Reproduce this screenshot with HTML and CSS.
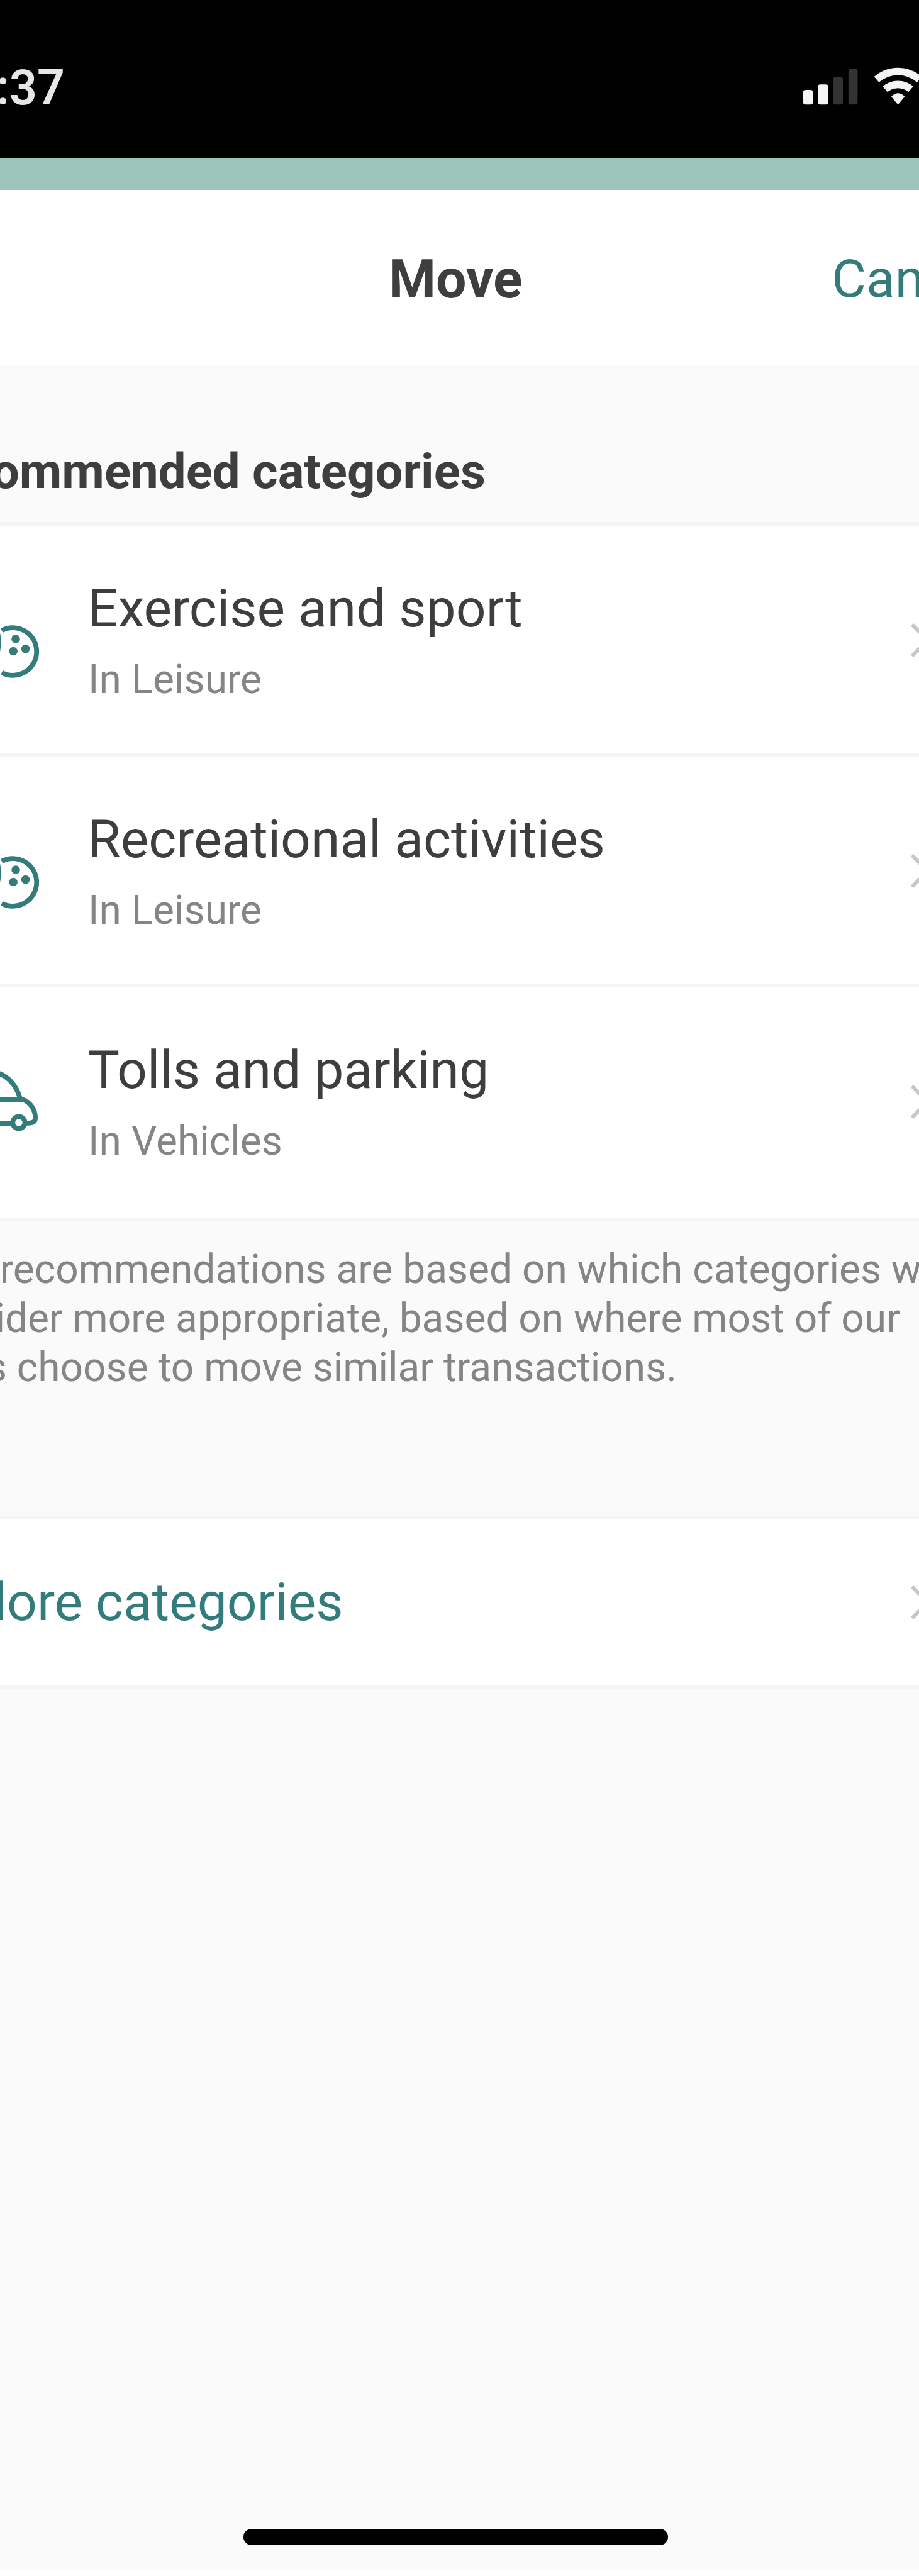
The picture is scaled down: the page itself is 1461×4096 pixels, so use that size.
FILE: index.html
```html
<!DOCTYPE html>
<html lang="en">
<head>
<meta charset="utf-8">
<meta name="viewport" content="width=device-width, initial-scale=1">
<title>Move</title>
<link rel="stylesheet" href="styles.css">
</head>
<body>
<svg class="defs" aria-hidden="true">
  <symbol id="bowling" viewBox="-150 0 220 136">
    <path d="M3 52A39 39 0 1 1 3 121"/>
    <path d="M-29 10c-10 0-14 8-12 17 2 10 0 16-4 26-8 20-6 50 2 72h28c8-22 18-52 10-72-4-10-14-16-12-26 2-9-2-17-12-17z"/>
    <g class="solid"><circle cx="26" cy="66" r="7"/><circle cx="22" cy="86" r="7"/><circle cx="42" cy="82" r="7"/></g>
  </symbol>
  <symbol id="car" viewBox="-150 0 220 136">
    <path d="M33 62C27 40 12 25-6 20-22 16-50 17-60 20-76 30-88 48-94 64M-94 64H37C51 69 58 82 58 94 58 101 55 103 43 103M19 104H-70M-94 64c-14 4-18 20-16 40h16M-26 18v46"/>
    <circle cx="31" cy="102" r="10"/><circle cx="-82" cy="102" r="10"/>
  </symbol>
  <symbol id="chevron" viewBox="0 0 34 58"><path d="M3 4l25 25-25 25"/></symbol>
</svg>

<div class="screen">
  <div class="status">
    <span class="time">9:37</span>
    <svg class="signals" viewBox="0 0 330 78" aria-hidden="true">
      <rect x="6" y="42" width="16" height="24" rx="4"/>
      <rect x="30" y="33" width="17" height="33" rx="4"/>
      <rect class="off" x="55" y="21" width="16" height="45" rx="4"/>
      <rect class="off" x="80" y="8" width="15" height="58" rx="4"/>
      <path class="arc" d="M126 25A53 53 0 0 1 196 25M140 41A32 32 0 0 1 182 41"/>
      <path d="M150 53q11-11 22 0l-9 11q-2 2-4 0z"/>
      <rect x="226" y="8" width="94" height="56" rx="16"/>
    </svg>
  </div>

  <header class="header">
    <h1 class="title">Move</h1>
    <button class="cancel" type="button">Cancel</button>
  </header>

  <main class="content">
    <h2 class="heading">Recommended categories</h2>
    <ul class="group">
      <li><a class="row" href="#exercise">
        <svg class="icon" aria-hidden="true"><use href="#bowling"/></svg>
        <span class="label"><span class="name">Exercise and sport</span><span class="parent">In Leisure</span></span>
        <svg class="chevron" aria-hidden="true"><use href="#chevron"/></svg>
      </a></li>
      <li><a class="row" href="#recreation">
        <svg class="icon" aria-hidden="true"><use href="#bowling"/></svg>
        <span class="label"><span class="name">Recreational activities</span><span class="parent">In Leisure</span></span>
        <svg class="chevron" aria-hidden="true"><use href="#chevron"/></svg>
      </a></li>
      <li><a class="row" href="#tolls">
        <svg class="icon" aria-hidden="true"><use href="#car"/></svg>
        <span class="label"><span class="name">Tolls and parking</span><span class="parent">In Vehicles</span></span>
        <svg class="chevron" aria-hidden="true"><use href="#chevron"/></svg>
      </a></li>
    </ul>
    <p class="note">Your recommendations are based on which categories we consider more appropriate, based on where most of our users choose to move similar transactions.</p>
    <a class="row explore" href="#categories">
      <span class="label">Explore categories</span>
      <svg class="chevron" aria-hidden="true"><use href="#chevron"/></svg>
    </a>
  </main>

  <div class="home"></div>
</div>
</body>
</html>
```

FILE: styles.css
```css
:root {
  --teal: #347c7c;
  --ink: #3e3e3e;
  --muted: #858585;
  --line: #f5f5f5;
  --edge: 80px;
}

* { box-sizing: border-box; }

body {
  margin: 0;
  overflow-x: hidden;
  background: #fafafa;
  font-family: Roboto, "Liberation Sans", sans-serif;
  color: var(--ink);
}

.defs { display: none; }

/* The phone screen is wider than the window and bleeds off both sides. */
.screen {
  display: flex;
  flex-direction: column;
  min-height: 100vh;
  margin: 0 -213px 0 -226px;
  border-bottom: 10px solid #fff;
}

.status {
  display: flex;
  align-items: center;
  justify-content: space-between;
  padding: 95px 82px 66px 176px;
  background: #000;
  color: #e6e6e6;
}

.time {
  font-size: 77px;
  line-height: 90px;
  font-weight: 600;
}

.signals { width: 321px; height: 76px; fill: #f4f4f4; }
.signals .off { fill: #333; }
.signals .arc { fill: none; stroke: #f4f4f4; stroke-width: 12; }

.header {
  display: grid;
  grid-template-columns: 1fr auto 1fr;
  padding: 92px 96px 87px;
  border-top: 51px solid #9cc4b9;
  background: #fff;
  line-height: 100px;
}

.title {
  grid-column: 2;
  margin: 0;
  font-size: 86px;
  font-weight: 700;
}

.cancel {
  justify-self: end;
  padding: 0;
  border: 0;
  background: none;
  font: inherit;
  font-size: 84px;
  color: var(--teal);
}

.heading {
  margin: 0;
  padding: 124px var(--edge) 35px;
  font-size: 78px;
  line-height: 90px;
}

.group {
  margin: 0;
  padding: 0 0 5px;
  border-bottom: 6px solid var(--line);
  background: #fff;
  list-style: none;
}

.row {
  display: flex;
  align-items: center;
  gap: 72px;
  padding: 82px 193px 79px var(--edge);
  border-top: 6px solid var(--line);
  background: #fff;
  color: inherit;
  text-decoration: none;
}

.label {
  display: flex;
  flex: 1;
  flex-direction: column;
  gap: 26px;
  font-size: 84px;
  line-height: 100px;
}

.parent {
  font-size: 64px;
  line-height: 74px;
  color: var(--muted);
}

.icon {
  width: 214px;
  height: 132px;
  fill: none;
  stroke: var(--teal);
  stroke-width: 8;
}

.solid { fill: var(--teal); stroke: none; }

.chevron {
  width: 34px;
  height: 58px;
  fill: none;
  stroke: #c6c6c6;
  stroke-width: 6;
}

.note {
  margin: 0;
  padding: 38px 150px 0 var(--edge);
  font-size: 64px;
  line-height: 78px;
  color: var(--muted);
}

.explore {
  margin-top: 196px;
  padding-top: 82px;
  padding-bottom: 82px;
  border-bottom: 6px solid var(--line);
  color: var(--teal);
}

.home {
  width: 675px;
  height: 26px;
  margin: auto auto 39px;
  border-radius: 13px;
  background: #000;
}
```
